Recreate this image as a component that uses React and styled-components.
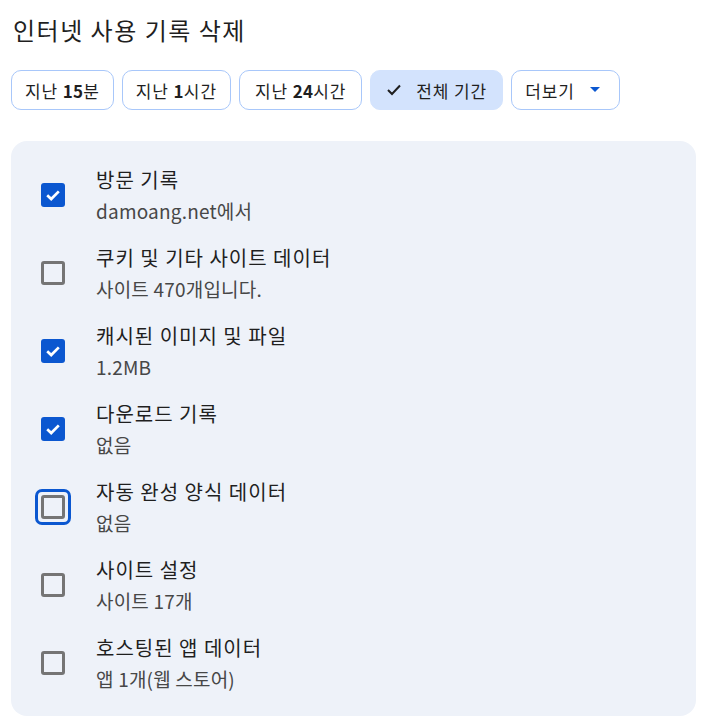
import React from "react";
import styled, { createGlobalStyle } from "styled-components";

const Global = createGlobalStyle`
  html, body { margin: 0; padding: 0; background: #ffffff; }
  body { font-family: "Noto Sans", "Noto Sans CJK KR", sans-serif; color: #1f1f1f; }
`;

const Page = styled.div`
  width: 714px;
  padding: 14px 18px 8px 11px;
  box-sizing: border-box;
`;

const Title = styled.h1`
  margin: 0 0 0 2px;
  font-family: "Noto Sans CJK KR", sans-serif;
  font-size: 24px;
  font-weight: 400;
  line-height: 32px;
  letter-spacing: 1.5px;
  color: #1f1f1f;
`;

const Chips = styled.div`
  display: flex;
  gap: 8px;
  margin-top: 24px;
`;

const Chip = styled.button`
  display: flex;
  align-items: center;
  gap: ${(p) => p.$gap || "15px"};
  height: 40px;
  box-sizing: border-box;
  padding: ${(p) => p.$pad || "0 13px"};
  border-radius: 10px;
  border: 1px solid ${(p) => (p.$selected ? "#d3e3fd" : "#a8c7fa")};
  background: ${(p) => (p.$selected ? "#d3e3fd" : "#ffffff")};
  font-family: "Noto Sans CJK KR", sans-serif;
  font-size: 17px;
  color: #1f1f1f;
  letter-spacing: 0.9px;
  b { font-weight: 700; letter-spacing: 0.2px; }
`;

const Label = styled.span`
  white-space: nowrap;
`;

const Panel = styled.div`
  margin-top: 31px;
  background: #eef2f9;
  border-radius: 16px;
  padding: 15px 0 14px;
  display: flex;
  flex-direction: column;
`;

const Row = styled.div`
  display: flex;
  align-items: center;
  height: 78px;
  padding-left: 30px;
  gap: 31px;
`;

const BoxWrap = styled.div`
  position: relative;
  width: 24px;
  height: 24px;
  flex: none;
`;

const Box = styled.div`
  width: 24px;
  height: 24px;
  box-sizing: border-box;
  border-radius: 3px;
  border: ${(p) => (p.$checked ? "none" : "3px solid #757575")};
  background: ${(p) => (p.$checked ? "#0b57d0" : "transparent")};
  display: flex;
  align-items: center;
  justify-content: center;
`;

const Focus = styled.div`
  position: absolute;
  inset: -6px;
  border: 3px solid #0b57d0;
  border-radius: 7px;
`;

const Texts = styled.div`
  display: flex;
  flex-direction: column;
  gap: 5px;
  font-family: "Noto Sans CJK KR", sans-serif;
`;

const ItemTitle = styled.div`
  font-size: 20px;
  line-height: 26px;
  color: #1f1f1f;
  letter-spacing: 1px;
`;

const ItemSub = styled.div`
  font-size: 19px;
  line-height: 26px;
  color: #474747;
  letter-spacing: 0.2px;
`;

const items = [
  { title: "방문 기록", sub: "damoang.net에서", checked: true },
  { title: "쿠키 및 기타 사이트 데이터", sub: "사이트 470개입니다.", checked: false },
  { title: "캐시된 이미지 및 파일", sub: "1.2MB", checked: true },
  { title: "다운로드 기록", sub: "없음", checked: true },
  { title: "자동 완성 양식 데이터", sub: "없음", checked: false, focus: true },
  { title: "사이트 설정", sub: "사이트 17개", checked: false },
  { title: "호스팅된 앱 데이터", sub: "앱 1개(웹 스토어)", checked: false },
];

const Check = () => (
  <svg width="20" height="20" viewBox="0 0 20 20">
    <path d="M4.2 10.2 L8.2 14 L15.8 6.4" fill="none" stroke="#ffffff" strokeWidth="2.7" />
  </svg>
);

export default function App() {
  return (
    <Page>
      <Global />
      <Title>인터넷 사용 기록 삭제</Title>
      <Chips>
        <Chip><Label>지난 <b>15</b>분</Label></Chip>
        <Chip><Label>지난 <b>1</b>시간</Label></Chip>
        <Chip $pad="0 15px"><Label>지난 <b>24</b>시간</Label></Chip>
        <Chip $selected $gap="15px" $pad="0 15px 0 16px">
          <svg width="14" height="12" viewBox="0 0 14 12">
            <path d="M1 6 L5 10 L13 1.5" fill="none" stroke="#1f1f1f" strokeWidth="2" />
          </svg>
          <Label>전체 기간</Label>
        </Chip>
        <Chip $pad="0 19px 0 13px">
          <Label>더보기</Label>
          <svg width="10" height="6" viewBox="0 0 10 6">
            <path d="M0 0 L10 0 L5 5 Z" fill="#0b57d0" />
          </svg>
        </Chip>
      </Chips>
      <Panel>
        {items.map((it) => (
          <Row key={it.title}>
            <BoxWrap>
              <Box $checked={it.checked}>{it.checked && <Check />}</Box>
              {it.focus && <Focus />}
            </BoxWrap>
            <Texts>
              <ItemTitle>{it.title}</ItemTitle>
              <ItemSub>{it.sub}</ItemSub>
            </Texts>
          </Row>
        ))}
      </Panel>
    </Page>
  );
}
